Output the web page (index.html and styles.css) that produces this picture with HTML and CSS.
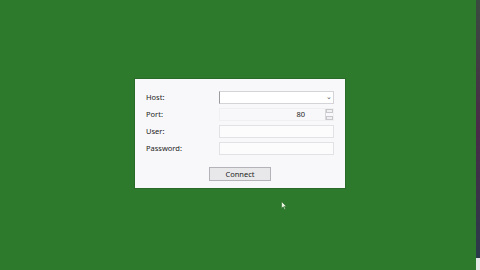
FILE: index.html
```html
<!DOCTYPE html>
<html>
<head>
<meta charset="utf-8">
<link rel="stylesheet" href="styles.css">
</head>
<body>
<div class="screen">
  <div class="stage">
    <div class="panel">
      <div class="form">
        <label class="lbl">Host:</label>
        <div class="field combo"><span class="chev">&#8964;</span></div>
        <label class="lbl">Port:</label>
        <div class="field port"><span class="num">80</span><span class="spin"><i></i><i></i></span></div>
        <label class="lbl">User:</label>
        <div class="field"></div>
        <label class="lbl">Password:</label>
        <div class="field"></div>
      </div>
      <div class="actions"><button class="btn">Connect</button></div>
    </div>
    <svg class="cursor" width="6" height="9" viewBox="0 0 6 9"><path d="M0.5 0.5 L0.5 7.5 L2.2 5.8 L3.5 8.5 L4.5 8 L3.3 5.4 L5.5 5.4 Z" fill="#e8f5e0" stroke="#2a6a2a" stroke-width="0.6"/></svg>
  </div>
  <div class="edge"><div class="edge-top"></div><div class="edge-bot"></div></div>
</div>
</body>
</html>
```
FILE: styles.css
```css
html, body { margin: 0; padding: 0; }
body { width: 480px; height: 270px; overflow: hidden; background: #2d7a2c; font-family: "Noto Sans", "Open Sans", sans-serif; }
.screen { display: flex; width: 480px; height: 270px; }
.stage { position: relative; width: 476px; height: 270px; display: flex; justify-content: flex-start; }
.panel { margin: 79px 0 0 135px; width: 210px; height: 109px; box-sizing: border-box; background: #f8f8fa; padding: 12px 11px 7px 11px; display: flex; flex-direction: column; box-shadow: 0 0 0 1px #2a6a28; }
.form { display: grid; grid-template-columns: 73px 115px; grid-auto-rows: 13px; row-gap: 4px; }
.lbl { font-size: 7.5px; line-height: 13px; color: #222; }
.field { position: relative; box-sizing: border-box; background: #fcfcfd; border: 1px solid #e2e2e6; }
.combo { border-color: #d4d4d8; border-left: 1px solid #9a9aa0; background: #fff; }
.chev { position: absolute; right: 1px; top: -2px; font-size: 7px; color: #555; line-height: 13px; }
.port { border-color: #f0f0f2; background: #f8f8fa; }
.num { position: absolute; right: 28px; top: 0; font-size: 7.5px; line-height: 11px; color: #222; }
.spin { position: absolute; right: 0; top: 0; width: 7px; height: 11px; display: flex; flex-direction: column; justify-content: space-between; border-left: 1px solid #d8d8dc; }
.spin i { display: block; height: 4px; border: 1px solid #c8c8cc; box-sizing: border-box; background: #f0f0f2; }
.actions { display: flex; margin-top: 12px; padding-left: 63px; }
.btn { width: 62px; height: 14px; padding: 0; box-sizing: border-box; border: 1px solid #b4b4b8; background: #e8e8ea; font-family: "Noto Sans", "Open Sans", sans-serif; font-size: 7.5px; line-height: 12px; color: #222; }
.cursor { position: absolute; left: 281px; top: 201px; }
.edge { width: 4px; height: 270px; display: flex; flex-direction: column; background: #2a2a3a; }
.edge-top { flex: 1; background: linear-gradient(#3a4a40, #4a2a48 50%, #2a3a4a); }
.edge-bot { height: 12px; background: #e8e8e8; }
```
